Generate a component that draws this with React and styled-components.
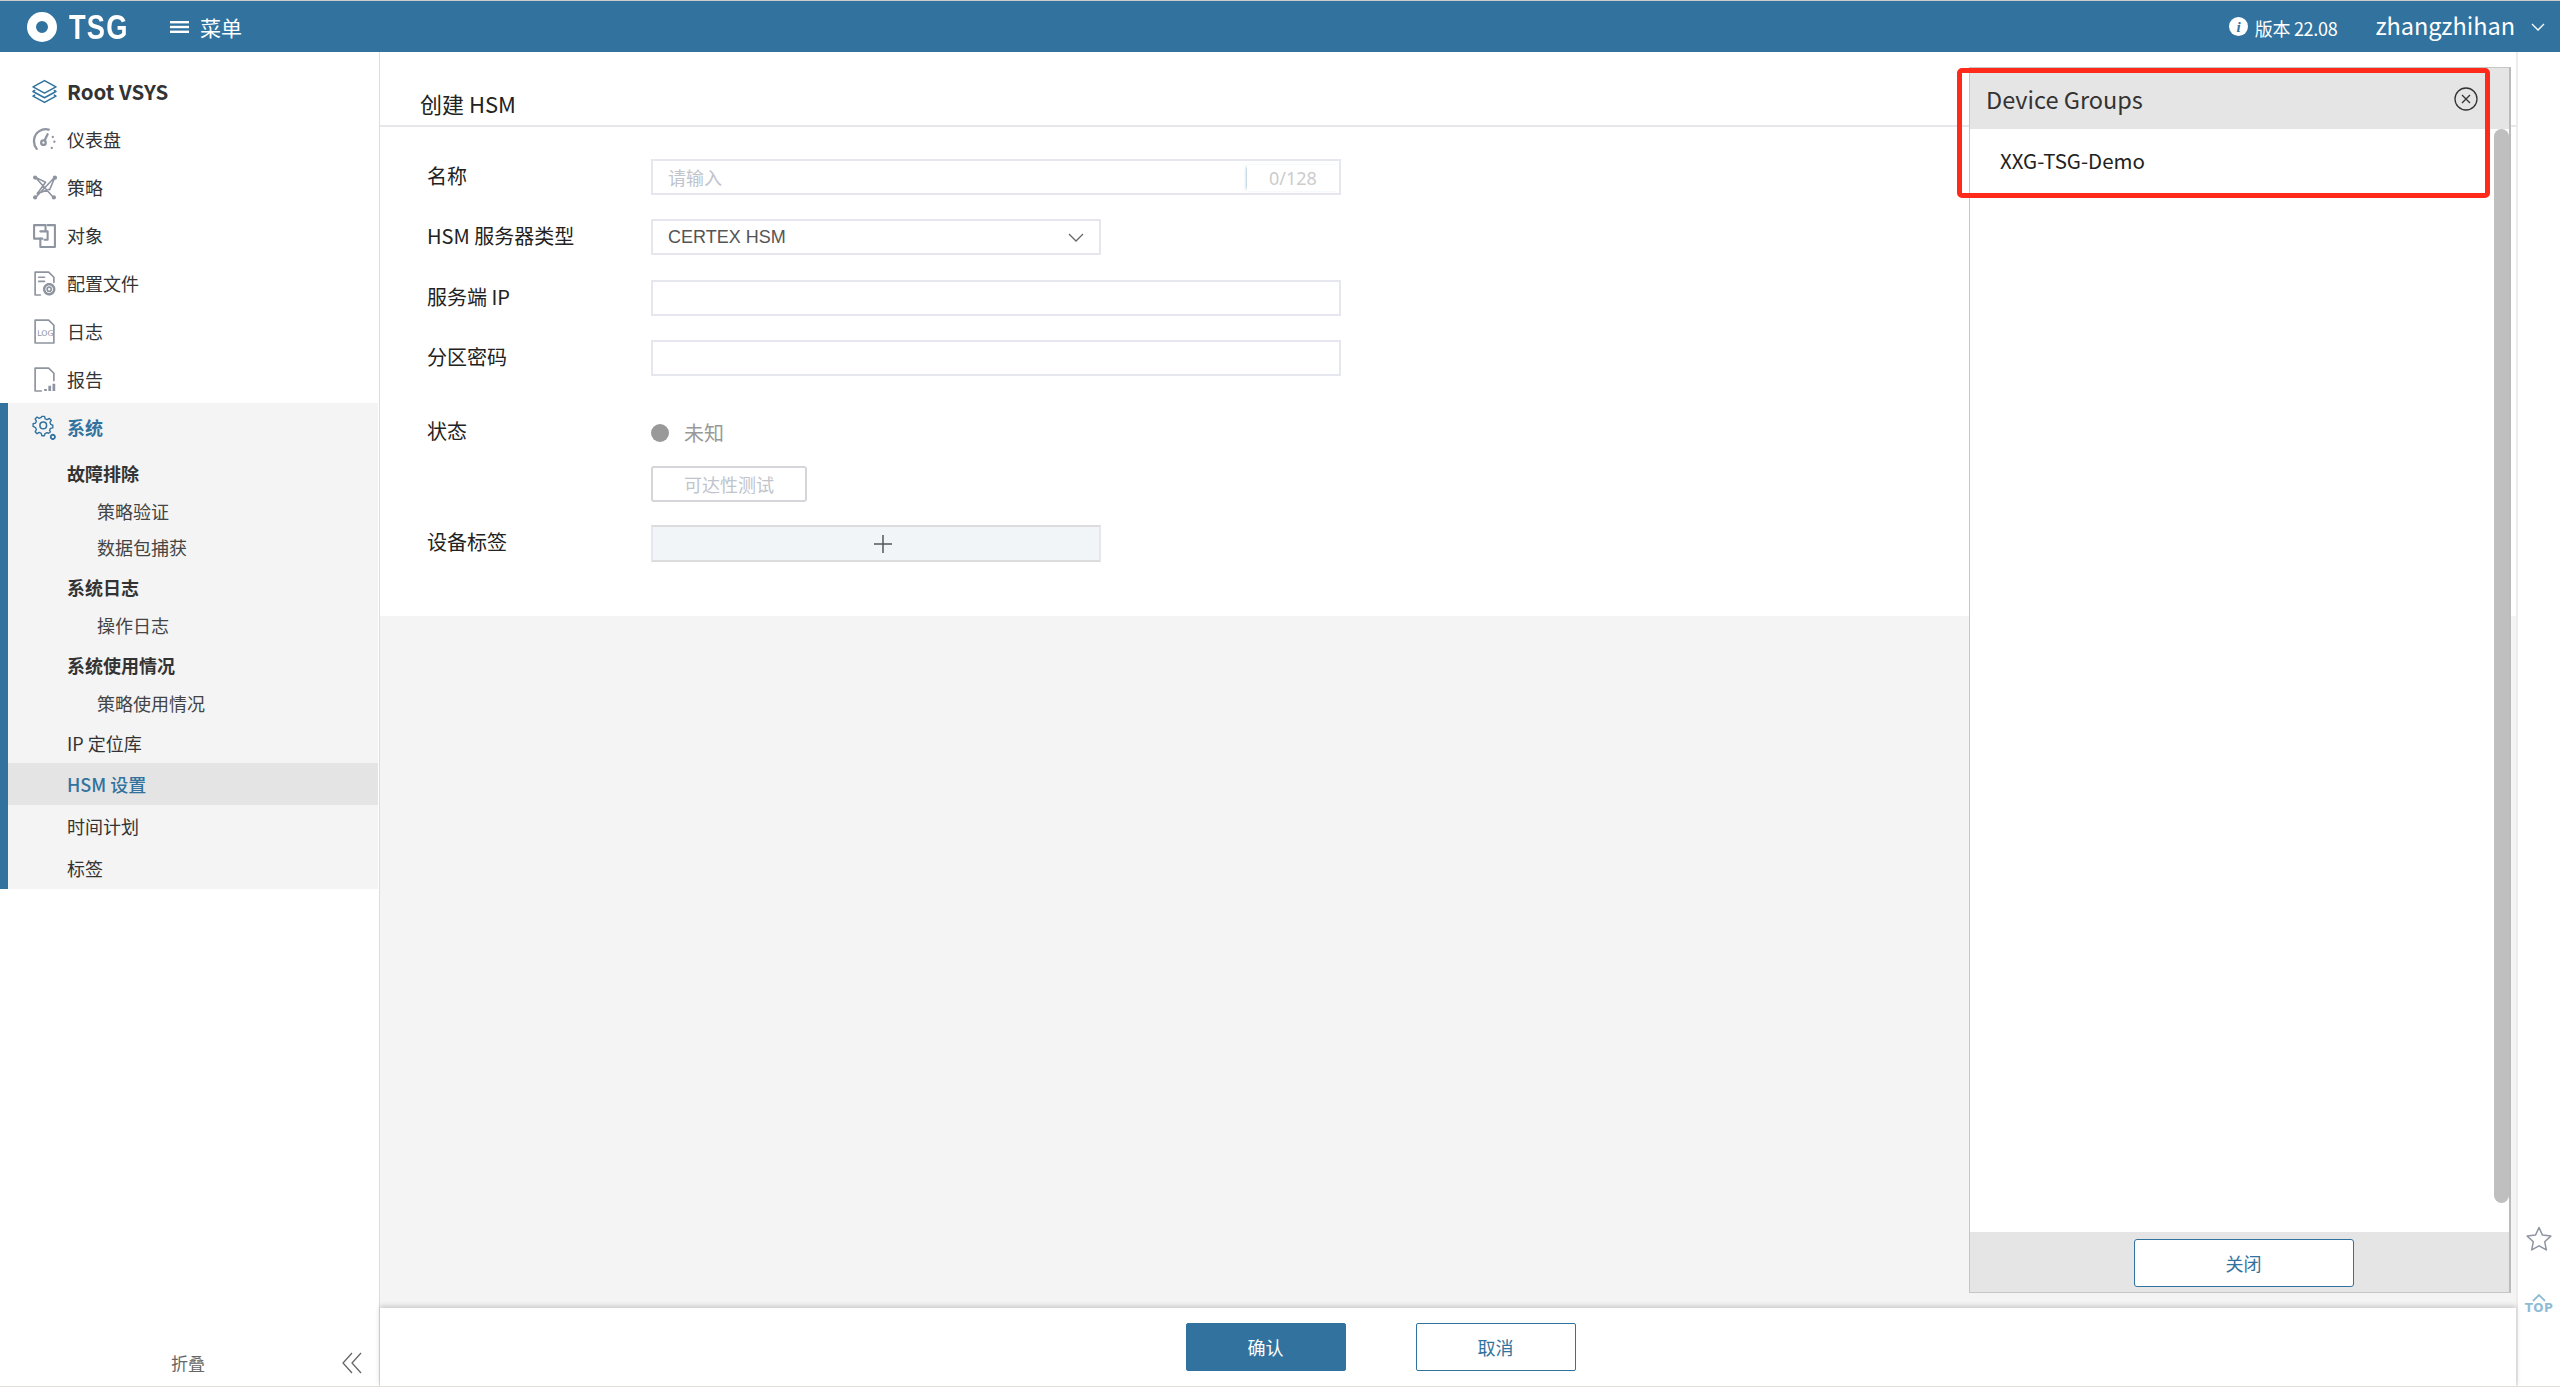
import React from "react";
import styled, { createGlobalStyle } from "styled-components";

const BLUE = "#31739e";
const FONT = `"Noto Sans CJK SC", "Noto Sans", sans-serif`;

const Global = createGlobalStyle`
  html, body { margin: 0; padding: 0; background: #fff; }
  body { font-family: ${FONT}; color: #333; }
  * { box-sizing: border-box; }
`;

const Page = styled.div`
  width: 2560px; height: 1387px; display: flex; flex-direction: column; overflow: hidden;
  border-top: 1px solid #c9cbcc; border-bottom: 1px solid #e4dfd6;
`;
const Header = styled.header`
  height: 51px; flex: none; background: ${BLUE}; color: #fff; display: flex; align-items: center; padding-left: 27px;
`;
const LogoRing = styled.span`
  width: 30px; height: 30px; border-radius: 50%; border: 9px solid #fff; flex: none; filter: blur(0.5px);
`;
const LogoText = styled.span`
  font-family: "Liberation Sans", sans-serif; font-weight: 700; font-size: 35px; line-height: 30px; margin-left: 12px; width: 80px;
  transform: scaleX(0.78); transform-origin: left center; letter-spacing: 1.5px;
`;
const MenuBtn = styled.div`
  display: flex; align-items: center; gap: 11px; font-size: 21px; margin-left: 21px; margin-top: 1px;
`;
const HeaderRight = styled.div`
  margin-left: auto; display: flex; align-items: center; padding-right: 15px;
`;
const Version = styled.span`
  font-size: 18px; margin-left: 7px; margin-right: 38px; margin-top: 2px; letter-spacing: -0.3px;
`;
const User = styled.span`
  font-size: 23.5px; margin-right: 16px; margin-top: -3px;
`;

const Body = styled.div`
  flex: 1; display: flex; min-height: 0;
`;
const Sidebar = styled.aside`
  width: 380px; flex: none; display: flex; flex-direction: column; padding: 15px 1px 0 0; border-right: 1px solid #dcdde2;
`;
const NavRow = styled.div`
  height: 48px; display: flex; align-items: center; gap: 10px; padding-left: ${(p) => (p.$inSection ? 24 : 32)}px;
  font-size: 18px; color: ${(p) => (p.$active ? BLUE : "#333")}; font-weight: ${(p) => (p.$active ? 700 : 400)};
`;
const RootRow = styled(NavRow)`
  font-size: 20.5px; font-weight: 700; color: #333;
`;
const IconBox = styled.span`
  width: 25px; height: 25px; flex: none; display: flex; align-items: center; justify-content: center;
`;
const Section = styled.div`
  background: #f4f4f4; border-left: 8px solid ${BLUE}; height: 486px;
`;
const SubHead = styled.div`
  height: 40px; margin-top: 2px; display: flex; align-items: center; padding-left: 59px; font-size: 18px;
  font-weight: ${(p) => (p.$bold ? 700 : 400)}; color: #333;
`;
const SubItem = styled.div`
  height: 36px; display: flex; align-items: center; padding-left: 89px; font-size: 18px; color: #444;
`;
const SubPlain = styled.div`
  height: 42px; display: flex; align-items: center; padding-left: 59px; font-size: 18px;
  background: ${(p) => (p.$active ? "#e4e4e4" : "transparent")};
  color: ${(p) => (p.$active ? BLUE : "#333")}; font-weight: ${(p) => (p.$active ? 500 : 400)};
`;
const Collapse = styled.div`
  margin-top: auto; height: 47px; display: flex; align-items: center; padding-bottom: 0; font-size: 17px; color: #666;
`;
const CollapseText = styled.span`
  margin-left: 171px; width: 170px;
`;

const Main = styled.main`
  flex: 1; min-width: 0; display: flex; flex-direction: column; position: relative;
`;
const FormCard = styled.section`
  height: 564px; flex: none; background: #fff;
`;
const TitleBar = styled.div`
  height: 75px; border-bottom: 2px solid #e6e6ec; padding: 31px 0 0 40px; font-size: 22px; line-height: 40px; color: #222;
`;
const Row = styled.div`
  display: grid; grid-template-columns: 224px auto; justify-content: start; align-items: center; padding-left: 47px;
  margin-top: ${(p) => p.$mt}px;
`;
const Label = styled.label`
  font-size: 20px; color: #222; line-height: 30px; margin-top: -3px;
`;
const Field = styled.div`
  width: ${(p) => p.$w}px; height: ${(p) => p.$h || 36}px; border: 2px solid #e6e6ee; background: ${(p) => p.$bg || "#fff"};
  display: flex; align-items: center; padding-left: 15px; position: relative; font-size: 18px;
`;
const Placeholder = styled.span`
  color: #c0c4cc; margin-top: -1px;
`;
const Counter = styled.span`
  margin-left: auto; width: 92px; text-align: left; padding-left: 22px; color: #ccc; font-size: 18px; font-family: "Noto Sans", sans-serif;
  box-shadow: -2px 0 3px -2px rgba(49, 115, 158, 0.7);
  line-height: 26px; margin-top: 2px;
`;
const SelectValue = styled.span`
  font-family: "Liberation Sans", sans-serif; color: #555; font-size: 18px;
`;
const SelectChevron = styled.span`
  margin-left: auto; margin-right: 15px; display: flex;
`;
const Status = styled.div`
  display: flex; align-items: center; gap: 15px; font-size: 20px; color: #999;
`;
const Dot = styled.span`
  width: 18px; height: 18px; border-radius: 50%; background: #999;
`;
const GhostBtn = styled.div`
  width: 156px; height: 36px; border: 2px solid #d4d6da; border-radius: 3px; display: flex; align-items: center; justify-content: center;
  font-size: 18px; color: #c0c4cc;
`;
const AddField = styled(Field)`
  justify-content: center; padding-left: 14px; border-bottom-color: #dcdcdc; border-top-color: #dcdcdc;
`;
const GrayFill = styled.div`
  flex: 1; background: #f4f4f4;
`;
const Footer = styled.footer`
  height: 78px; flex: none; background: #fff; display: flex; align-items: center; justify-content: center;
  box-shadow: 0 -2px 5px rgba(0, 0, 0, 0.18); padding-bottom: 1px; padding-left: 0; gap: 70px; position: relative; padding-right: 135px;
  padding-top: 0;
`;
const FootBtn = styled.button`
  width: 160px; height: 48px; border-radius: 2px; font-family: ${FONT}; font-size: 18px; padding: 0;
  border: 1.5px solid ${BLUE}; background: ${(p) => (p.$primary ? BLUE : "#fff")}; color: ${(p) => (p.$primary ? "#fff" : BLUE)};
`;

const Panel = styled.div`
  position: absolute; top: 15px; left: 1589px; width: 542px; height: 1226px; background: #fff;
  border: 1px solid #c6c6c6; border-right: 2px solid #bbb; display: flex; flex-direction: column;
`;
const PanelHead = styled.div`
  height: 61px; flex: none; background: #e5e5e5; display: flex; align-items: center; justify-content: space-between;
  padding: 0 31px 0 16px; font-size: 23.5px; color: #333;
`;
const PanelBody = styled.div`
  flex: 1; position: relative; padding: 11px 0 0 30px; font-size: 20.5px; line-height: 40px; color: #222;
`;
const ScrollThumb = styled.div`
  position: absolute; right: 0; top: 0; width: 15px; height: 1074px; background: #bfbfbf; border-radius: 8px;
`;
const PanelFoot = styled.div`
  height: 60px; flex: none; background: #e5e5e5; display: flex; justify-content: center; padding: 7px 0 0 8px;
`;
const CloseBtn = styled.button`
  width: 220px; height: 48px; background: #fff; border: 1.5px solid ${BLUE}; border-radius: 3px; color: ${BLUE};
  font-family: ${FONT}; font-size: 18px; padding: 0;
`;
const Highlight = styled.div`
  position: absolute; top: 16px; left: 1577px; width: 533px; height: 130px; border: 5px solid #ff2a1a; border-radius: 5px; pointer-events: none;
`;

const Strip = styled.div`
  width: 44px; flex: none; border-left: 2px solid #ececec; background: #fff; display: flex; flex-direction: column; align-items: center;
  padding-top: 1174px;
`;
const TopLink = styled.div`
  margin-top: 42px; display: flex; flex-direction: column; align-items: center; color: #8fbcd4;
  font-family: "DejaVu Sans", sans-serif; font-weight: 700; font-size: 12px; line-height: 13px; letter-spacing: 0.5px;
`;

const Ico = ({ children, size = 25, color = "#8e94a0", sw = 1.8 }) => (
  <svg width={size} height={size} viewBox="0 0 24 24" fill="none" stroke={color} strokeWidth={sw} strokeLinecap="round" strokeLinejoin="round">
    {children}
  </svg>
);

const icons = {
  layers: (
    <Ico color={BLUE} sw={1.5}>
      <path d="M12 1.5 23 7.5 12 13.5 1 7.5Z" />
      <path d="M2.5 11 1 12 12 18 23 12 21.5 11" />
      <path d="M2.5 15.5 1 16.5 12 22.5 23 16.5 21.5 15.5" />
    </Ico>
  ),
  gauge: (
    <Ico sw={2.2}>
      <path d="M4.5 21C.5 16 1 8 7 4c3-2 6-2.4 9-1.5" />
      <path d="M15 7 12.5 12" />
      <circle cx="11" cy="15" r="2.2" />
      <path d="M20 9.5v.2M21.5 14v.2M19 20v.2" />
    </Ico>
  ),
  policy: (
    <Ico sw={1.5}>
      <path d="M3 2 21 22M22 2 3 22M3 2 13 7 5 18 16 14M22 2 17 14" />
      <circle cx="3" cy="2.5" r="1.3" fill="#8e94a0" />
      <circle cx="22" cy="2.5" r="1.3" fill="#8e94a0" />
      <circle cx="3" cy="21.5" r="1.3" fill="#8e94a0" />
      <circle cx="21" cy="21.5" r="1.3" fill="#8e94a0" />
    </Ico>
  ),
  object: (
    <Ico sw={2}>
      <path d="M10 15H2V2h11v5" />
      <path d="M8 8h7v8h-3M15 2h7v21H8v-8" />
    </Ico>
  ),
  config: (
    <Ico sw={1.6}>
      <path d="M8 23H3V1h13l5 5v5" />
      <path d="M6.5 6H12M6.5 10H12" />
      <circle cx="16.5" cy="17.5" r="4.8" strokeDasharray="2 1" strokeWidth="2.4" />
      <circle cx="16.5" cy="17.5" r="2" />
    </Ico>
  ),
  log: (
    <Ico sw={1.6}>
      <path d="M3 1h13l5 5v17H3Z" />
      <text x="5" y="16" fontSize="7.5" fontFamily="DejaVu Sans" stroke="none" fill="#8e94a0">LOG</text>
    </Ico>
  ),
  report: (
    <Ico sw={1.6}>
      <path d="M9 23H3V1h13l5 5v7" />
      <path d="M13 23v-2M17 23v-5M21 23v-7" strokeWidth="2.6" strokeLinecap="butt" />
    </Ico>
  ),
  system: (
    <Ico color={BLUE} sw={1.5}>
      <path d="M9 1.5h3l.6 2.6 2.3 1 2.3-1.4 2.1 2.1-1.4 2.3 1 2.3 2.1.6v3l-2.6.6-1 2.3 1 1.6-2 1.4-1.7-.7-2.2 1-.7 2.4H9l-.6-2.6-2.3-1-2.3 1.4-2.1-2.1 1.4-2.3-1-2.3L-.5 12.500V9.500l2.6-.6 1-2.300L1.700 4.300l2.100-2.100 2.300 1.400 2.300-1z" transform="translate(1.500 0) scale(.88)" />
      <circle cx="10.800" cy="10" r="3.200" />
      <circle cx="20" cy="21" r="2" strokeWidth="1.800" strokeDasharray="1.500 .6" />
    </Ico>
  ),
};

const top = ["仪表盘:gauge", "策略:policy", "对象:object", "配置文件:config", "日志:log", "报告:report"].map((s) => s.split(":"));

export default function App() {
  return (
    <>
      <Global />
      <Page>
        <Header>
          <LogoRing />
          <LogoText>TSG</LogoText>
          <MenuBtn>
            <svg width="19" height="12" viewBox="0 0 19 12" fill="#fff">
              <rect width="19" height="2.400" />
              <rect y="4.800" width="19" height="2.400" />
              <rect y="9.600" width="19" height="2.400" />
            </svg>
            <span>菜单</span>
          </MenuBtn>
          <HeaderRight>
            <svg width="19" height="19" viewBox="0 0 19 19">
              <circle cx="9.500" cy="9.500" r="9.500" fill="#fff" />
              <text x="9.500" y="15" textAnchor="middle" fontFamily="Liberation Serif" fontStyle="italic" fontWeight="700" fontSize="15" fill={BLUE}>i</text>
            </svg>
            <Version>版本 22.08</Version>
            <User>zhangzhihan</User>
            <svg width="14" height="8" viewBox="0 0 14 8" fill="none" stroke="#fff" strokeWidth="1.300">
              <path d="M1 1l6 6 6-6" />
            </svg>
          </HeaderRight>
        </Header>
        <Body>
          <Sidebar>
            <RootRow>
              <IconBox>{icons.layers}</IconBox>
              Root VSYS
            </RootRow>
            {top.map(([t, i]) => (
              <NavRow key={t}>
                <IconBox>{icons[i]}</IconBox>
                {t}
              </NavRow>
            ))}
            <Section>
              <NavRow $active $inSection>
                <IconBox>{icons.system}</IconBox>
                系统
              </NavRow>
              <SubHead $bold>故障排除</SubHead>
              <SubItem>策略验证</SubItem>
              <SubItem>数据包捕获</SubItem>
              <SubHead $bold>系统日志</SubHead>
              <SubItem>操作日志</SubItem>
              <SubHead $bold>系统使用情况</SubHead>
              <SubItem>策略使用情况</SubItem>
              <SubHead>IP 定位库</SubHead>
              <SubPlain $active>HSM 设置</SubPlain>
              <SubPlain>时间计划</SubPlain>
              <SubPlain>标签</SubPlain>
            </Section>
            <Collapse>
              <CollapseText>折叠</CollapseText>
              <svg width="22" height="22" viewBox="0 0 22 22" fill="none" stroke="#666" strokeWidth="1.300">
                <path d="M11 1 2 11l9 10M20 1l-9 10 9 10" />
              </svg>
            </Collapse>
          </Sidebar>
          <Main>
            <FormCard>
              <TitleBar>创建 HSM</TitleBar>
              <Row $mt={32}>
                <Label>名称</Label>
                <Field $w={690}>
                  <Placeholder>请输入</Placeholder>
                  <Counter>0/128</Counter>
                </Field>
              </Row>
              <Row $mt={24}>
                <Label>HSM 服务器类型</Label>
                <Field $w={450}>
                  <SelectValue>CERTEX HSM</SelectValue>
                  <SelectChevron>
                    <svg width="16" height="9" viewBox="0 0 16 9" fill="none" stroke="#666" strokeWidth="1.300">
                      <path d="M1 1l7 7 7-7" />
                    </svg>
                  </SelectChevron>
                </Field>
              </Row>
              <Row $mt={25}>
                <Label>服务端 IP</Label>
                <Field $w={690} />
              </Row>
              <Row $mt={24}>
                <Label>分区密码</Label>
                <Field $w={690} />
              </Row>
              <Row $mt={42}>
                <Label>状态</Label>
                <Status>
                  <Dot />
                  未知
                </Status>
              </Row>
              <Row $mt={19}>
                <span />
                <GhostBtn>可达性测试</GhostBtn>
              </Row>
              <Row $mt={23}>
                <Label>设备标签</Label>
                <AddField $w={450} $h={37} $bg="#f2f5f8">
                  <svg width="18" height="18" viewBox="0 0 18 18" stroke="#555" strokeWidth="1.500">
                    <path d="M9 0v18M0 9h18" />
                  </svg>
                </AddField>
              </Row>
            </FormCard>
            <GrayFill />
            <Footer>
              <FootBtn $primary>确认</FootBtn>
              <FootBtn>取消</FootBtn>
            </Footer>
            <Panel>
              <PanelHead>
                Device Groups
                <svg width="24" height="24" viewBox="0 0 24 24" fill="none" stroke="#333" strokeWidth="1.300">
                  <circle cx="12" cy="12" r="11" />
                  <path d="M8 8l8 8M16 8l-8 8" />
                </svg>
              </PanelHead>
              <PanelBody>
                XXG-TSG-Demo
                <ScrollThumb />
              </PanelBody>
              <PanelFoot>
                <CloseBtn>关闭</CloseBtn>
              </PanelFoot>
            </Panel>
            <Highlight />
          </Main>
          <Strip>
            <svg width="26" height="26" viewBox="0 0 26 26" fill="none" stroke="#8e94a0" strokeWidth="1.500" strokeLinejoin="round">
              <path d="M13 1.500l3.500 7.600 8.300 1-6.100 5.600 1.600 8.200-7.300-4.100-7.300 4.100 1.600-8.200-6.100-5.600 8.300-1z" />
            </svg>
            <TopLink>
              <svg width="14" height="8" viewBox="0 0 14 8" fill="none" stroke="#8fbcd4" strokeWidth="1.800">
                <path d="M1 7l6-6 6 6" />
              </svg>
              TOP
            </TopLink>
          </Strip>
        </Body>
      </Page>
    </>
  );
}
